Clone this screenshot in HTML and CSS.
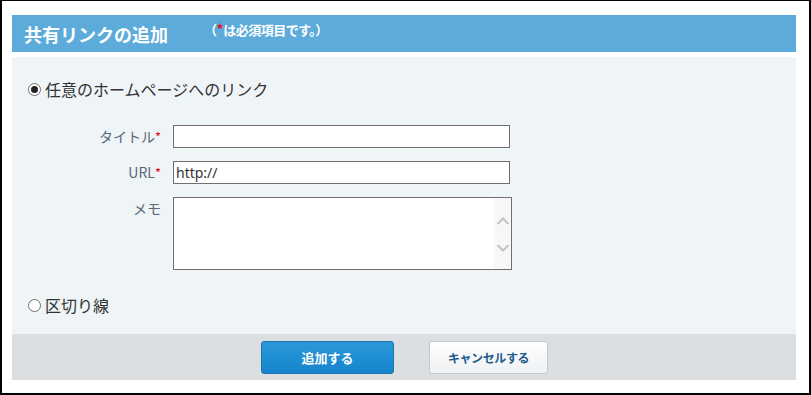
FILE: index.html
```html
<!DOCTYPE html>
<html lang="ja">
<head>
<meta charset="utf-8">
<title>共有リンクの追加</title>
<link rel="stylesheet" href="styles.css">
</head>
<body>
<div class="frame">
  <div class="header">
    <h1 class="title">共有リンクの追加</h1>
    <span class="note">（<span class="req">*</span>は必須項目です。）</span>
  </div>
  <div class="panel">
    <label class="radio-row">
      <span class="radio checked"></span>
      <span class="radio-text">任意のホームページへのリンク</span>
    </label>
    <div class="form">
      <div class="label">タイトル<span class="req">*</span></div>
      <input class="field" type="text" value="">
      <div class="label">URL<span class="req">*</span></div>
      <input class="field" type="text" value="http://">
      <div class="label">メモ</div>
      <div class="memo">
        <textarea class="memo-text"></textarea>
        <div class="scrollbar">
          <svg class="chev" width="14" height="10" viewBox="0 0 14 10"><path d="M1.5 8 L7 2.5 L12.5 8" fill="none" stroke="#c4c4c4" stroke-width="2"/></svg>
          <svg class="chev" width="14" height="10" viewBox="0 0 14 10"><path d="M1.5 2 L7 7.5 L12.5 2" fill="none" stroke="#c4c4c4" stroke-width="2"/></svg>
        </div>
      </div>
    </div>
    <label class="radio-row second">
      <span class="radio"></span>
      <span class="radio-text">区切り線</span>
    </label>
  </div>
  <div class="footer">
    <button class="btn primary">追加する</button>
    <button class="btn secondary">キャンセルする</button>
  </div>
</div>
</body>
</html>
```
FILE: styles.css
```css
* { box-sizing: border-box; }
html, body {
  margin: 0;
  padding: 0;
  background: #fff;
}
body {
  font-family: "Noto Sans CJK JP", "Noto Sans", "Liberation Sans", sans-serif;
}
.frame {
  width: 811px;
  height: 395px;
  border: 2px solid #000;
  border-top-width: 1px;
  padding: 14px 13px 13px 10px;
  display: flex;
  flex-direction: column;
}
.header {
  height: 37px;
  background: #5dabdb;
  display: flex;
  align-items: center;
  padding-left: 12px;
  margin-bottom: 5px;
  color: #fff;
}
.title {
  margin: 0;
  font-size: 18px;
  font-weight: bold;
  line-height: 22px;
  letter-spacing: 0;
}
.note {
  margin-left: 36px;
  margin-bottom: 8px;
  font-size: 13px;
  font-weight: bold;
  line-height: 16px;
  letter-spacing: -0.5px;
}
.req { color: #e60012; }
.header .req { color: #e8101e; font-size: 14px; }
.panel {
  background: #eff4f7;
  padding: 20px 16px 17px 16px;
  display: flex;
  flex-direction: column;
  flex: 1;
}
.radio-row {
  display: flex;
  align-items: center;
  height: 24px;
  color: #333;
  font-size: 16px;
}
.radio-row.second { margin-top: 23px; }
.radio {
  width: 13px;
  height: 13px;
  border: 1px solid #707070;
  border-radius: 50%;
  background: #fff;
  margin-right: 4px;
  display: flex;
  align-items: center;
  justify-content: center;
  flex: none;
}
.radio.checked::after {
  content: "";
  width: 7px;
  height: 7px;
  border-radius: 50%;
  background: #222;
}
.form {
  margin-top: 24px;
  display: grid;
  grid-template-columns: 133px 339px;
  column-gap: 12px;
  row-gap: 13px;
  align-items: start;
}
.label {
  text-align: right;
  font-size: 14px;
  line-height: 22px;
  color: #5a6878;
}
.label .req { font-size: 13px; }
.field {
  width: 337px;
  height: 23px;
  margin: 0;
  border: 1px solid #6f6f6f;
  border-radius: 0;
  padding: 0 2px;
  background: #fff;
  font-family: "Noto Sans", "Liberation Sans", sans-serif;
  font-size: 14px;
  color: #333;
  outline: none;
}
.memo {
  width: 339px;
  height: 73px;
  border: 1px solid #6f6f6f;
  background: #fff;
  display: flex;
}
.memo-text {
  flex: 1;
  border: none;
  margin: 0;
  padding: 2px;
  resize: none;
  outline: none;
  background: #fff;
  font-family: inherit;
  font-size: 14px;
}
.scrollbar {
  width: 17px;
  background: #f7f7f7;
  display: flex;
  flex-direction: column;
  align-items: center;
  justify-content: center;
  gap: 17px;
  padding-top: 2px;
}
.chev { display: block; }
.footer {
  height: 46px;
  background: #dbdfe2;
  display: flex;
  align-items: center;
  justify-content: center;
  gap: 35px;
  padding-left: 1px;
}
.btn {
  height: 33px;
  margin: 0;
  border-radius: 3px;
  font-family: "Noto Sans CJK JP", sans-serif;
  font-weight: bold;
  cursor: pointer;
}
.primary {
  width: 133px;
  border: 1px solid #1f72ad;
  background: linear-gradient(#2b98da, #1584cb);
  color: #fff;
  font-size: 13px;
}
.secondary {
  width: 119px;
  border: 1px solid #c3c8cc;
  background: linear-gradient(#ffffff, #eef0f2);
  color: #1f5b8d;
  font-size: 12px;
  letter-spacing: -0.4px;
}
```
